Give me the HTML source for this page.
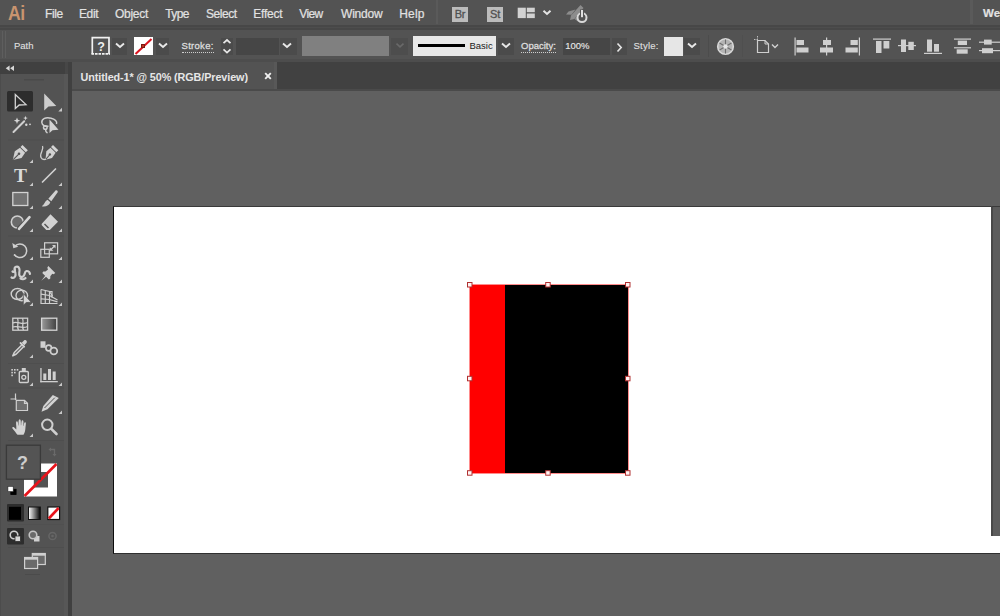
<!DOCTYPE html>
<html lang="en">
<head>
<meta charset="utf-8">
<title>Untitled-1* @ 50% (RGB/Preview)</title>
<style>
html,body{margin:0;padding:0;}
body{width:1000px;height:616px;overflow:hidden;background:#606060;font-family:"Liberation Sans",sans-serif;position:relative;}
.abs,#app *{position:absolute;box-sizing:border-box;}
#app{position:absolute;left:0;top:0;width:1000px;height:616px;overflow:hidden;}
/* menu bar */
#menubar{left:0;top:0;width:1000px;height:28px;background:#535353;border-bottom:1px solid #484848;}
#menubar .m{top:7px;font-size:12px;line-height:14px;color:#e2e2e2;white-space:nowrap;-webkit-text-stroke:0.200px #e2e2e2;}
#logo{left:8px;top:1.500px;font-size:21px;line-height:22px;font-weight:bold;color:#c9946f;letter-spacing:-0.500px;transform:scaleX(0.840);transform-origin:0 0;}
.appbtn{top:7px;width:16px;height:15px;background:#bcbcbc;color:#505050;font-size:11px;line-height:15px;text-align:center;letter-spacing:-0.300px;-webkit-text-stroke:0.300px #505050;}
/* control bar */
#ctrl{left:0;top:28px;width:1000px;height:34px;background:#535353;border-top:1px solid #464646;border-bottom:3px solid #4d4d4d;}
#ctrl .t{font-size:9.500px;line-height:12px;color:#dedede;white-space:nowrap;top:10.500px;-webkit-text-stroke:0.150px #dedede;}
#ctrl .dd{background:#4b4b4b;top:9px;height:17px;}
#ctrl .field{background:#464646;top:8.500px;height:17.500px;}
/* tab bar */
#tabs{left:70px;top:62px;width:930px;height:29px;background:#414141;border-bottom:2px solid #4a4a4a;}
#tab{left:2px;top:0px;width:205px;height:27px;background:#535353;border-right:3px solid #585858;}
#tab span{left:8.600px;top:9px;font-size:10.800px;line-height:13px;font-weight:bold;color:#e6e6e6;white-space:nowrap;letter-spacing:-0.090px;}
/* tool bar */
#tools{left:0;top:62px;width:68px;height:554px;background:#535353;border-right:4px solid #575757;border-left:1px solid #4c4c4c;}
#toolhead{left:-1px;top:0;width:69px;height:11.500px;background:#404040;border-right:4px solid #474747;}
/* canvas */
#canvas{left:72px;top:91px;width:928px;height:526px;background:#606060;}
#gutter{left:68px;top:62px;width:4px;height:554px;background:#404040;}
#artboard{left:113px;top:206px;width:900px;height:348px;background:#fff;border:1px solid #0c0c0c;border-top-color:#3a3a3a;border-bottom-color:#303030;}
</style>
</head>
<body>
<div id="app">
  <div id="canvas"></div>
  <div id="artboard"></div>
  <div id="rightgray" style="left:991px;top:206px;width:9px;height:330px;background:#5c5c5c;border-left:2px solid #484848;border-top:1px solid #3a3a3a;"></div>

  <!-- selected artwork -->
  <div id="art">
    <div style="left:470px;top:285px;width:35px;height:188px;background:#ff0000;"></div>
    <div style="left:505px;top:285px;width:123px;height:188px;background:#000;"></div>
    <div style="left:469px;top:284px;width:160px;height:190px;border:1px solid #ff8c8c;"></div>
    <svg style="left:460px;top:275px" width="180" height="210" viewBox="460 275 180 210"><g fill="#fff4f4" stroke="#b03030" stroke-width="1">
      <rect x="467.500" y="282.500" width="4.500" height="4.500"/><rect x="545.700" y="282.500" width="4.500" height="4.500"/><rect x="625.500" y="282.500" width="4.500" height="4.500"/>
      <rect x="467.500" y="376.300" width="4.500" height="4.500"/><rect x="625.500" y="376.300" width="4.500" height="4.500"/>
      <rect x="467.500" y="470.700" width="4.500" height="4.500"/><rect x="545.700" y="470.700" width="4.500" height="4.500"/><rect x="625.500" y="470.700" width="4.500" height="4.500"/>
    </g></svg>
  </div>

  <div id="menubar">
    <div id="logo">Ai</div>
    <span class="m" style="left:45.000px;letter-spacing:-0.400px">File</span>
    <span class="m" style="left:79.000px;letter-spacing:-0.400px">Edit</span>
    <span class="m" style="left:115.000px;letter-spacing:-0.280px">Object</span>
    <span class="m" style="left:165.300px;letter-spacing:-0.600px">Type</span>
    <span class="m" style="left:206.000px;letter-spacing:-0.450px">Select</span>
    <span class="m" style="left:253.200px;letter-spacing:-0.200px">Effect</span>
    <span class="m" style="left:299.300px;letter-spacing:-0.600px">View</span>
    <span class="m" style="left:341.000px;letter-spacing:-0.200px">Window</span>
    <span class="m" style="left:399.200px;letter-spacing:0.200px">Help</span>
    <div class="appbtn" style="left:452px">Br</div>
    <div class="appbtn" style="left:487px">St</div>
    <div style="left:436px;top:0px;width:2px;height:24px;background:#5a5a5a;"></div>
    <svg style="left:516px;top:2px" width="80" height="24" viewBox="516 2 80 24">
      <g fill="#d2d2d2"><rect x="517.700" y="7.700" width="8.100" height="10.400"/><rect x="526.800" y="7.700" width="8" height="4.500"/><rect x="526.800" y="13.500" width="8" height="4.600"/></g>
      <path d="M543.500 10.800 L547 14 L550.500 10.800" fill="none" stroke="#e4e4e4" stroke-width="2"/>
      <g fill="#8c8c8c"><path d="M580.500 5 L583.500 8 L574.500 19 L570 20 L571 15.500 Z"/><path d="M568.500 11.500 L575.500 9.500 L571.500 14.800 L566 14.500 Z"/><path d="M578 21.500 L579.500 14.500 L574.500 19 Z"/></g>
      <circle cx="582" cy="17.600" r="4.500" fill="#535353" stroke="#d8d8d8" stroke-width="2"/>
      <rect x="580" y="9.500" width="4" height="7.500" fill="#535353"/>
      <rect x="581" y="10" width="2" height="7.200" fill="#e0e0e0"/>
    </svg>
    <div style="left:970px;top:0px;width:3px;height:24px;background:#5a5a5a;"></div>
    <span class="m" style="left:983px;top:6px;font-weight:bold;font-size:11.500px;">We</span>
  </div>

  <div id="ctrl">
    <div style="left:2px;top:2px;width:1px;height:27px;background:#5e5e5e;"></div><div style="left:5px;top:2px;width:1px;height:27px;background:#5e5e5e;"></div>
    <span class="t" style="left:14px">Path</span>
    <!-- fill box -->
    <svg style="left:90px;top:7px" width="22" height="21" viewBox="90 36 22 21"><path d="M92.300 54.200 V37.700 H109 V54.200" fill="none" stroke="#f2f2f2" stroke-width="1.700"/><path d="M91.500 53.800 H110" fill="none" stroke="#f2f2f2" stroke-width="1.800" stroke-dasharray="2.600 0.900"/></svg>
    <span style="left:96px;top:11px;width:10px;text-align:center;color:#f0f0f0;font-size:12.500px;font-weight:bold;line-height:14px;">?</span>
    <div class="dd" style="left:112px;width:15px;"><svg style="left:2.500px;top:3.800px" width="10" height="7" viewBox="0 0 10 7"><path d="M1 1.500 L5 5 L9 1.500" fill="none" stroke="#e8e8e8" stroke-width="1.900"/></svg></div>
    <!-- stroke box -->
    <div style="left:134px;top:8px;width:19px;height:18px;background:#fff;"><svg style="left:0;top:0" width="19" height="18" viewBox="0 0 19 18"><path d="M1.500 17 L17.500 2" stroke="#dc1420" stroke-width="2"/><rect x="7.500" y="7.500" width="3" height="3" fill="#c03020" stroke="#7a1810" stroke-width="1"/></svg></div>
    <div class="dd" style="left:156px;width:13px;"><svg style="left:1.500px;top:3.800px" width="10" height="7" viewBox="0 0 10 7"><path d="M1 1.500 L5 5 L9 1.500" fill="none" stroke="#e8e8e8" stroke-width="1.900"/></svg></div>
    <span class="t" style="left:181.500px;letter-spacing:0.300px;border-bottom:1px dotted #cfcfcf;-webkit-text-stroke:0.300px #dcdcdc;">Stroke:</span>
    <!-- spinner -->
    <div class="dd" style="left:221px;width:12px;"><svg style="left:1px;top:0px" width="10" height="17" viewBox="0 0 10 17"><path d="M1.500 5.200 L5 2 L8.500 5.200 M1.500 11.400 L5 14.600 L8.500 11.400" fill="none" stroke="#e8e8e8" stroke-width="1.700"/></svg></div>
    <div class="field" style="left:236px;width:43px;"></div>
    <div class="dd" style="left:280px;width:17px;"><svg style="left:2.200px;top:3.800px" width="10" height="7" viewBox="0 0 10 7"><path d="M1 1.500 L5 5 L9 1.500" fill="none" stroke="#e8e8e8" stroke-width="1.900"/></svg></div>
    <div style="left:302px;top:6.500px;width:87px;height:20.500px;background:#808080;"></div>
    <div class="dd" style="left:391px;width:17px;background:#4d4d4d;"><svg style="left:4px;top:3.800px" width="10" height="7" viewBox="0 0 10 7"><path d="M1.500 1.700 L5 4.800 L8.500 1.700" fill="none" stroke="#696969" stroke-width="1.700"/></svg></div>
    <!-- brush def -->
    <div style="left:413px;top:7px;width:83px;height:19.500px;background:#e8e8e8;">
      <div style="left:5px;top:7.500px;width:47px;height:3px;background:#000;"></div>
      <span style="left:56.500px;top:3.500px;font-size:9.500px;line-height:12px;color:#1a1a1a;">Basic</span>
    </div>
    <div class="dd" style="left:498px;width:16px;"><svg style="left:3px;top:3.800px" width="10" height="7" viewBox="0 0 10 7"><path d="M1 1.500 L5 5 L9 1.500" fill="none" stroke="#e8e8e8" stroke-width="1.900"/></svg></div>
    <span class="t" style="left:521px;border-bottom:1px dotted #cfcfcf;-webkit-text-stroke:0.300px #dcdcdc;">Opacity:</span>
    <div class="field" style="left:563px;width:47px;"></div>
    <span class="t" style="left:565.200px;color:#ebebeb">100%</span>
    <div class="dd" style="left:612px;width:15px;"><svg style="left:4px;top:4px" width="7" height="11" viewBox="0 0 7 11"><path d="M1.5 1.5 L5.2 5.5 L1.5 9.5" fill="none" stroke="#e6e6e6" stroke-width="1.6"/></svg></div>
    <span class="t" style="left:633.500px;letter-spacing:0.250px">Style:</span>
    <div style="left:664px;top:8px;width:19px;height:19px;background:#e6e6e6;"></div>
    <div class="dd" style="left:684px;width:16px;"><svg style="left:3px;top:3.800px" width="10" height="7" viewBox="0 0 10 7"><path d="M1 1.500 L5 5 L9 1.500" fill="none" stroke="#e8e8e8" stroke-width="1.900"/></svg></div>
    <div style="left:708px;top:6px;width:1px;height:22px;background:#4c4c4c;"></div>
    <!-- recolor -->
    <svg style="left:716px;top:8px" width="19" height="19" viewBox="0 0 19 19"><circle cx="9.500" cy="9.500" r="7.800" fill="#b4b4b4" stroke="#d8d8d8" stroke-width="1.600"/><g stroke="#6e6e6e" stroke-width="1.100"><path d="M9.500 2.500 V16.500 M3.500 6 L15.500 13 M3.500 13 L15.500 6"/></g><circle cx="9.500" cy="9.500" r="2.300" fill="#e6e6e6"/></svg>
    <div style="left:742px;top:6px;width:1px;height:22px;background:#4f4f4f;"></div>
    <!-- doc setup -->
    <svg style="left:753px;top:6px" width="30" height="22" viewBox="0 0 30 22"><path d="M4.5 1 V17.5 M1 4.5 H6" fill="none" stroke="#bdbdbd" stroke-width="1" stroke-dasharray="1.5 1"/><path d="M4.5 5.5 H12 L15.5 9 V17.5 H4.5 Z" fill="none" stroke="#cfcfcf" stroke-width="1.2"/><path d="M12 5.5 V9 H15.5" fill="none" stroke="#cfcfcf" stroke-width="1"/><path d="M19 9.5 L22 12.5 L25 9.5" fill="none" stroke="#d0d0d0" stroke-width="1.4"/></svg>
    <!-- align icons -->
    <svg style="left:790px;top:6px" width="210" height="24" viewBox="790 34 210 24" fill="#cfcfcf">
      <rect x="794.5" y="36.5" width="1.2" height="18"/><rect x="796.5" y="39" width="7.5" height="5"/><rect x="796.5" y="46.5" width="12" height="5"/>
      <rect x="826" y="36.5" width="1.2" height="18"/><rect x="823" y="39" width="8" height="5"/><rect x="820" y="46.5" width="13" height="5"/>
      <rect x="858.8" y="36.5" width="1.2" height="18"/><rect x="850.5" y="39" width="7.3" height="5"/><rect x="845.5" y="46.5" width="12.3" height="5"/>
      <rect x="873" y="37.5" width="18" height="1.2"/><rect x="876" y="40" width="5.5" height="12"/><rect x="883.5" y="40" width="5.8" height="7.5"/>
      <rect x="898" y="44" width="18" height="1.2"/><rect x="901" y="38.5" width="5" height="12.5"/><rect x="908.3" y="40.8" width="5.5" height="8.2"/>
      <rect x="924" y="51.8" width="18" height="1.2"/><rect x="927" y="38.5" width="5" height="12.2"/><rect x="934" y="43" width="5" height="7.7"/>
      <rect x="954" y="37.5" width="17" height="1.2"/><rect x="957.8" y="39.6" width="9.2" height="4.4"/><rect x="954" y="46.2" width="17" height="1.2"/><rect x="956.7" y="48.3" width="11" height="4.4"/>
      <rect x="979" y="40.6" width="21" height="1.2"/><rect x="984" y="38.6" width="7.7" height="5"/><rect x="979" y="49" width="21" height="1.2"/><rect x="982" y="47.2" width="11" height="5"/>
    </svg>
  </div>

  <div id="band" style="left:0;top:25px;width:1000px;height:5px;background:#474747;"><div style="left:0;top:2px;width:1000px;height:1px;background:#4d4d4d;"></div></div>
  <div id="tabs">
    <div id="tab"><span>Untitled-1* @ 50% (RGB/Preview)</span><svg style="left:190.500px;top:9px" width="10" height="10" viewBox="0 0 10 10"><path d="M2.200 2.200 L7.800 7.800 M7.800 2.200 L2.200 7.800" stroke="#f0f0f0" stroke-width="1.900"/></svg></div>
  </div>
  <div id="tools"><div id="toolhead"></div>
    <svg style="left:-1px;top:0" width="70" height="554" viewBox="0 62 70 554">
      <g id="tp-head" fill="#d8d8d8"><path d="M9.600 65.400 L5.700 68.200 L9.600 71 Z M14 65.400 L10.100 68.200 L14 71 Z"/></g>
      <rect x="24" y="79" width="20" height="1.400" fill="#4a4a4a"/>
      <g fill="#4e4e4e"><rect x="8" y="139.5" width="56" height="1"/><rect x="8" y="235.5" width="56" height="1"/><rect x="8" y="363" width="56" height="1"/><rect x="8" y="387.5" width="56" height="1"/><rect x="8" y="440" width="56" height="1"/><rect x="8" y="524" width="56" height="1" fill="#505050"/><rect x="8" y="547" width="56" height="1"/></g>
      <!-- flyout triangles -->
      <g fill="#c8c8c8" id="fly">
        <path d="M62 107.800 v3.700 h-3.700 Z"/>
        <path d="M33 159.500 v3.5 h-3.5 Z"/>
        <path d="M33 182.5 v3.5 h-3.5 Z"/><path d="M62 182.5 v3.5 h-3.5 Z"/>
        <path d="M33 205.500 v3.5 h-3.5 Z"/><path d="M62 205.500 v3.5 h-3.500 Z"/>
        <path d="M33 228.500 v3.5 h-3.5 Z"/><path d="M62 228.500 v3.500 h-3.5 Z"/>
        <path d="M33 256.500 v3.5 h-3.5 Z"/><path d="M62 256.500 v3.500 h-3.500 Z"/>
        <path d="M33 279.500 v3.5 h-3.5 Z"/><path d="M62 279.500 v3.5 h-3.500 Z"/>
        <path d="M33 302.500 v3.5 h-3.5 Z"/><path d="M62 302.5 v3.500 h-3.500 Z"/>
        <path d="M33 354.500 v3.5 h-3.5 Z"/>
        <path d="M33 382.500 v3.5 h-3.5 Z"/><path d="M62 382.500 v3.500 h-3.5 Z"/>
        <path d="M62 410.500 v3.500 h-3.5 Z"/>
        <path d="M33 433.500 v3.5 h-3.5 Z"/>
      </g>
      <!-- row1: selection / direct selection -->
      <rect x="7" y="91" width="26" height="20.500" rx="1.5" fill="#2d2d2d"/>
      <path d="M15.300 94.500 V108.600 L19.200 105 L26 104.600 Z" fill="none" stroke="#d4d4d4" stroke-width="1.300" stroke-linejoin="miter"/>
      <path d="M44.200 93.500 V110.500 L48.500 106.500 L56.300 106 Z" fill="#cdcdcd"/>
      <!-- row2: magic wand / lasso -->
      <g stroke="#d0d0d0" stroke-width="2" stroke-linecap="round"><path d="M13.500 132 L24.200 121.300"/></g>
      <g fill="#d6d6d6"><path d="M17 117.500 l0.900 2.300 l2.300 0.900 l-2.300 0.900 l-0.900 2.300 l-0.900 -2.300 l-2.300 -0.900 l2.300 -0.900 Z"/><path d="M25.500 115.800 l0.600 1.700 l1.700 0.600 l-1.700 0.600 l-0.600 1.700 l-0.600 -1.700 l-1.700 -0.600 l1.700 -0.600 Z"/><circle cx="26.300" cy="124.800" r="1.200"/><circle cx="30" cy="124.300" r="0.900"/></g>
      <g fill="none" stroke="#cfcfcf" stroke-width="1.500"><path d="M51 118.300 C46 116.500 41.500 119 41.800 122.500 C42 125.500 46 127 48.500 126"/><path d="M51 118.300 C55 119 57.500 121.500 56.500 124"/><circle cx="45.300" cy="127.500" r="1.800"/><path d="M45.500 129.300 C45.500 131 46.500 132.500 47.500 133"/></g>
      <path d="M49.500 119.500 V133 L52.500 130.200 L58.500 129.800 Z" fill="#d2d2d2"/>
      <!-- row3: pen / curvature -->
      <g id="pen"><path d="M22.500 145 L27.800 150.300 L25.800 152.300 L20.500 147 Z" fill="#d4d4d4"/><path d="M20 147.700 L25.100 152.800 L21.500 158 L12.800 160 L14.800 151.300 Z" fill="#d0d0d0"/><path d="M13.200 159.600 L18.500 154.300" stroke="#535353" stroke-width="1.100"/><circle cx="19" cy="153.800" r="1.300" fill="#535353"/></g>
      <g id="curv"><g transform="translate(1.500 0)"><path d="M51.500 145 L56.800 150.300 L54.800 152.300 L49.500 147 Z" fill="#d4d4d4"/><path d="M49 147.700 L54.100 152.800 L50.500 158 L44 159.800 L44.800 151.300 Z" fill="#d0d0d0"/><path d="M44.300 159.400 L48 155" stroke="#535353" stroke-width="1.100"/><circle cx="48.400" cy="154.400" r="1.200" fill="#535353"/></g><path d="M42.500 146 C44.500 150 39 153 41 157.500 C41.800 159.300 44 159.800 46 159.200" fill="none" stroke="#cfcfcf" stroke-width="1.300"/></g>
      <!-- row4: type / line -->
      <text x="20.500" y="182.400" text-anchor="middle" font-family="Liberation Serif, serif" font-weight="bold" font-size="19.500" fill="#dadada">T</text>
      <path d="M42.500 182 L55.500 169" stroke="#cfcfcf" stroke-width="1.700" stroke-linecap="round"/>
      <!-- row5: rectangle / paintbrush -->
      <rect x="12.800" y="192.500" width="15" height="13" fill="#727272" stroke="#d2d2d2" stroke-width="1.300"/>
      <g id="brush"><path d="M55.500 190.500 C57 189.800 58.300 191.200 57.500 192.600 L51.300 201.200 L48.300 198.800 Z" fill="#d2d2d2"/><path d="M47.500 199.800 L50.300 202.200 C49.500 205.500 45.500 207 41.800 206.200 C44.300 205 44.500 201.500 47.500 199.800 Z" fill="#cfcfcf"/></g>
      <!-- row6: shaper / eraser -->
      <g id="shaper"><circle cx="17.300" cy="222" r="6" fill="#6a6a6a" stroke="#cfcfcf" stroke-width="1.600"/><path d="M16 231.500 L19.500 229 L30.500 218 L28.300 215.800 L17.300 226.800 Z" fill="#535353"/><path d="M19 228.800 L29.500 217.200" stroke="#d6d6d6" stroke-width="2.600" stroke-linecap="round"/></g>
      <g id="eraser"><path d="M50.500 214.300 L58 221.800 L49.800 230 L46.300 230 L42 225.500 C41.500 224.800 41.500 224 42 223.500 Z" fill="#d2d2d2"/><path d="M44.500 224 L48.500 228" stroke="#535353" stroke-width="1.500"/></g>
      <!-- row7: rotate / scale -->
      <g id="rotate" fill="none" stroke="#cfcfcf" stroke-width="1.500"><path d="M14.800 246.200 A6.800 6.800 0 1 1 14.200 254.500"/><path d="M12.300 243 L13.300 248.300 L18.300 246.800 Z" fill="#cfcfcf" stroke="none"/><path d="M14.200 254.500 A6.800 6.800 0 0 0 16 256.300" stroke-dasharray="1 1.200"/></g>
      <g id="scale" fill="none" stroke="#cfcfcf" stroke-width="1.200"><rect x="44.600" y="242.800" width="13" height="11"/><rect x="40.800" y="249.300" width="8.500" height="8"/><path d="M50.500 250 L55 245.500"/><path d="M52 245 H55.500 V248.500 Z" fill="#cfcfcf" stroke="none"/><path d="M49.800 247.200 V250.700 H53.300 Z" fill="#cfcfcf" stroke="none"/></g>
      <!-- row8: width / puppet pin -->
      <g id="width" fill="none" stroke="#cfcfcf" stroke-width="2.200" stroke-linecap="round"><path d="M11.500 277.500 C14 279 16 276 15.500 273.500 C15 270.500 13 268 16 266.800 C19.500 265.800 20 270 19.300 272.500 C18.800 275.500 20 278 23 276.500 C25.500 275 24 271.500 26.500 271 C28.500 270.800 29.800 272.500 30 274"/><path d="M12.500 271.500 C14 272.500 15 271.500 15 270"/><path d="M20.500 278.500 C22 279.500 24.500 279.300 25.500 278"/></g>
      <g id="pin" fill="#d2d2d2"><path d="M48.300 266 L55.300 273 L53.600 274.300 L52.300 273.800 L50.300 276.300 L50.300 278.500 L48.800 279.500 L42.300 273 L43.300 271.500 L45.500 271.500 L48 269.500 L47.300 267.800 Z"/><path d="M45.600 275.200 L46.700 276.300 L41.300 280.800 Z"/></g>
      <!-- row9: shape builder / perspective grid -->
      <g id="shapeb" fill="none" stroke="#cfcfcf" stroke-width="1.400"><ellipse cx="17.500" cy="294" rx="6.300" ry="5.500"/><ellipse cx="21.800" cy="295.500" rx="5.800" ry="5.300"/><path d="M23.300 293.500 V305.300 L26.200 302.600 L31.200 302.200 Z" fill="#d6d6d6" stroke="#535353" stroke-width="0.800"/></g>
      <g id="persp" fill="none" stroke="#cfcfcf" stroke-width="1.200"><path d="M41 289.500 V303.500 H57.500"/><path d="M41 289.500 L49.500 291.500 V303.500"/><path d="M45.300 290.500 V303.500"/><path d="M41 294.200 L49.500 295.500 M41 298.800 L49.500 299.500"/><path d="M49.500 295.500 L57.500 300 M49.500 291.500 L52.500 296 M49.500 299.500 L57.500 301.800"/><path d="M49.500 291.500 H52 V297.500" /></g>
      <!-- row10: mesh / gradient -->
      <g id="mesh" fill="none" stroke="#cfcfcf" stroke-width="1.300"><rect x="12.800" y="318.200" width="14.800" height="12"/><path d="M12.800 323 C17 320.500 22 325.500 27.600 322.500"/><path d="M12.800 327 C17 325 22 329.500 27.600 326.500"/><path d="M17.500 318.200 C19.500 322 16 326 18.500 330.200"/><path d="M22.500 318.200 C24.500 322 21 326 23.500 330.200"/></g>
      <defs><linearGradient id="gr1" x1="0" x2="1" y1="0" y2="0"><stop offset="0" stop-color="#9a9a9a"/><stop offset="1" stop-color="#404040"/></linearGradient><linearGradient id="gr2" x1="0" x2="1" y1="0" y2="0"><stop offset="0" stop-color="#ffffff"/><stop offset="1" stop-color="#000000"/></linearGradient></defs>
      <rect x="41.600" y="318.200" width="15.200" height="12" fill="url(#gr1)" stroke="#d6d6d6" stroke-width="1.300"/>
      <!-- row11: eyedropper / blend -->
      <g id="eyed"><path d="M24 340.500 C25.500 339 27.800 341.300 26.500 343 L24.300 345.300 L21.800 342.800 Z" fill="#d2d2d2"/><path d="M20.500 343 L24.200 346.700" stroke="#d2d2d2" stroke-width="1.800" stroke-linecap="round"/><path d="M21.800 345 L14.300 352.500 L12.800 355.800 L16 354.300 L23.500 346.800" fill="none" stroke="#d0d0d0" stroke-width="1.600" stroke-linejoin="round"/></g>
      <g id="blend"><rect x="40.500" y="341.300" width="5" height="6.500" fill="#d0d0d0"/><circle cx="48.700" cy="348" r="2.800" fill="#535353" stroke="#cfcfcf" stroke-width="1.700"/><circle cx="53.800" cy="351" r="3.400" fill="#535353" stroke="#cfcfcf" stroke-width="1.800"/></g>
      <!-- row12: symbol sprayer / graph -->
      <g id="spray"><g fill="#cfcfcf"><rect x="11.300" y="369" width="1.600" height="1.600"/><rect x="14" y="369" width="1.600" height="1.600"/><rect x="16.700" y="369" width="1.600" height="1.600"/><rect x="11.300" y="371.800" width="1.600" height="1.600"/><rect x="14" y="371.800" width="1.600" height="1.600"/><rect x="11.300" y="374.600" width="1.600" height="1.600"/><rect x="21.800" y="368" width="4" height="3"/></g><rect x="19.300" y="371.500" width="9" height="11" rx="1" fill="none" stroke="#d0d0d0" stroke-width="1.400"/><circle cx="23.800" cy="377.300" r="2" fill="none" stroke="#d0d0d0" stroke-width="1.300"/></g>
      <g id="graph" fill="#d0d0d0"><rect x="40.300" y="368" width="1.300" height="14.300"/><rect x="40.300" y="381" width="17.500" height="1.300"/><rect x="43.300" y="373.500" width="3" height="6.500"/><rect x="48" y="369" width="3" height="11"/><rect x="52.700" y="371.500" width="3" height="8.500"/></g>
      <!-- row13: artboard / slice -->
      <g id="artb" fill="none" stroke="#cfcfcf" stroke-width="1.200"><path d="M15.500 393.500 V400 M10.500 399 H16.500" /><path d="M16.300 400.300 H24.500 L27.500 403.300 V410.500 H16.300 Z" fill="#6e6e6e"/><path d="M24.500 400.300 V403.300 H27.500"/></g>
      <g id="slice"><path d="M52.800 395 L58.800 398 L47.500 409.300 L41.500 411.800 L43.300 406 Z" fill="#d2d2d2"/><path d="M44.500 408 L54.800 397.700" stroke="#535353" stroke-width="1"/></g>
      <!-- row14: hand / zoom -->
      <g id="hand" fill="#d4d4d4"><path d="M16.300 426.500 C16 423 15.800 421.500 16.800 421.300 C17.800 421.200 18 422.500 18.300 425.500 L18.600 425.500 C18.500 421.500 18.500 419.300 19.700 419.300 C21 419.300 20.800 421.500 20.900 425.300 L21.200 425.300 C21.300 422 21.500 420 22.700 420.200 C23.800 420.400 23.500 422.500 23.300 425.800 L23.600 425.900 C24 423.500 24.300 422 25.300 422.300 C26.300 422.600 25.800 424.500 25.500 427 C25.300 430 25 432.500 23.500 434.800 L17.500 434.800 C16 433 14.500 430.800 12.500 428.500 C11.800 427.500 13 426.500 14.200 427.500 L16.300 429.500 Z"/></g>
      <g id="zoom" fill="none" stroke="#cfcfcf"><circle cx="47.300" cy="424.800" r="5.200" stroke-width="2"/><path d="M51.300 428.800 L56.500 434" stroke-width="2.600" stroke-linecap="round"/></g>
      <!-- fill / stroke -->
      <g id="swap" fill="none" stroke="#6a6a6a" stroke-width="1.300"><path d="M50 449.500 H54.500 V454.500"/><path d="M48.500 449.500 l2.500 -2 v4 Z M54.500 456.500 l-2 -2.500 h4 Z" fill="#6a6a6a" stroke="none"/></g>
      <path d="M24 463.500 H57 V496.500 H24 Z M33.800 472 V487.500 H48 V472 Z" fill="#ffffff" fill-rule="evenodd"/>
      <path d="M24.500 496 L56.500 464" stroke="#e8141c" stroke-width="2.600"/>
      <rect x="6.400" y="445.200" width="34" height="34" fill="#545454" stroke="#3a3a3a" stroke-width="1.300"/>
      <text x="22.500" y="469" text-anchor="middle" font-family="Liberation Sans, sans-serif" font-weight="bold" font-size="18" fill="#cdcdcd">?</text>
      <g id="deflt"><rect x="10.800" y="489.300" width="5.300" height="5.300" fill="#000" stroke="#000" stroke-width="0.800"/><rect x="7.900" y="486.300" width="5.300" height="5.300" fill="#fff" stroke="#222" stroke-width="0.600"/></g>
      <!-- color / gradient / none -->
      <rect x="7" y="504" width="17" height="17.500" rx="1" fill="#2d2d2d"/>
      <rect x="9" y="506.800" width="12" height="13" fill="#000"/>
      <rect x="28.500" y="507" width="11.800" height="12.500" fill="url(#gr2)" stroke="#111" stroke-width="1"/>
      <rect x="47.800" y="507" width="11.800" height="12.500" fill="#fff" stroke="#111" stroke-width="1.200"/>
      <path d="M48.800 518.500 L58.600 508" stroke="#e8141c" stroke-width="2.600"/>
      <!-- draw modes -->
      <rect x="7" y="528" width="17" height="16.500" rx="1" fill="#2d2d2d"/>
      <g id="dm1"><circle cx="14" cy="535" r="3.800" fill="#2d2d2d" stroke="#cfcfcf" stroke-width="1.600"/><rect x="15" y="536" width="5.500" height="5.500" fill="#d6d6d6" stroke="#2d2d2d" stroke-width="0.800"/></g>
      <g id="dm2"><rect x="34" y="536" width="5.500" height="5.500" fill="#cfcfcf"/><circle cx="33" cy="535" r="3.800" fill="#6a6a6a" stroke="#c4c4c4" stroke-width="1.600"/></g>
      <g id="dm3"><circle cx="52.500" cy="536" r="3.600" fill="none" stroke="#666" stroke-width="1.500"/><circle cx="52.500" cy="536" r="1.300" fill="#666"/></g>
      <rect x="25" y="574" width="15" height="1" fill="#4b4b4b"/>
      <!-- screen mode -->
      <rect x="32.300" y="553.500" width="13" height="11" fill="#6a6a6a" stroke="#d0d0d0" stroke-width="1.200"/><rect x="32.300" y="553.500" width="13" height="2.200" fill="#d0d0d0"/>
      <rect x="24.600" y="557.500" width="13" height="11" fill="#6a6a6a" stroke="#d0d0d0" stroke-width="1.200"/><rect x="24.600" y="557.500" width="13" height="2.200" fill="#d0d0d0"/>
      <!-- TOOLS-INSERT -->
    </svg>
  </div>
  <div id="gutter"></div>
</div>
</body>
</html>
